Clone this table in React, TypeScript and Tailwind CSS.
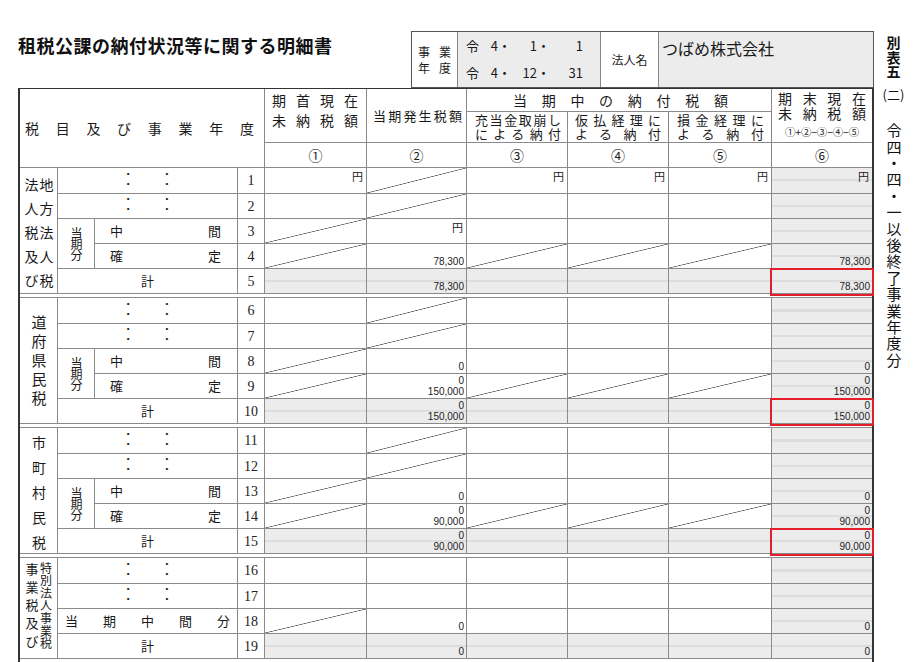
import React from "react";

const GRAY =
  "bg-[linear-gradient(to_bottom,#ececec_45%,#dddddd_45%,#dddddd_54%,#ececec_54%)]";
const DIAG =
  "bg-white bg-[linear-gradient(to_bottom_right,transparent_calc(50%_-_0.7px),#5a5a5a_50%,transparent_calc(50%_+_0.7px))]";

type Kind = "w" | "d" | "g";
type CellSpec = { k: Kind; yen?: boolean; nums?: string[]; red?: boolean };

const Y: CellSpec = { k: "w", yen: true };
const W: CellSpec = { k: "w" };
const D: CellSpec = { k: "d" };
const G: CellSpec = { k: "g" };

function Spread({ text, className = "" }: { text: string; className?: string }) {
  return (
    <div className={`flex justify-between ${className}`}>
      {Array.from(text).map((c, i) => (
        <span key={i}>{c}</span>
      ))}
    </div>
  );
}

/* multi-line text, each line distributed across the full width */
function JText({ text, className = "" }: { text: string; className?: string }) {
  return (
    <div className={`whitespace-pre-line text-justify [text-align-last:justify] ${className}`}>
      {text}
    </div>
  );
}

function Cell({ c }: { c: CellSpec }) {
  const bg = c.k === "g" ? GRAY : c.k === "d" ? DIAG : "bg-white";
  return (
    <div className={`relative flex flex-col ${bg}`}>
      {c.yen ? (
        <span className="self-end pr-[3px] pt-[2px] text-[11px] leading-[12px]">円</span>
      ) : null}
      {c.nums ? (
        <div className="mt-auto whitespace-pre-line pr-[2px] pb-[1px] text-right font-['Liberation_Sans',Arial,sans-serif] text-[10px] leading-[11px] text-[#222]">
          {c.nums.join("\n")}
        </div>
      ) : null}
      {c.red ? (
        <div className="pointer-events-none absolute -left-[2px] -right-[2px] -top-[1px] -bottom-[3px] z-10 border-2 border-[#e3202a]" />
      ) : null}
    </div>
  );
}

function Cells({ row }: { row: CellSpec[] }) {
  return (
    <>
      {row.map((c, i) => (
        <Cell key={i} c={c} />
      ))}
    </>
  );
}

function Dots() {
  return (
    <div className="col-span-2 flex items-center justify-center gap-[36px] bg-white pb-[4px] font-['Liberation_Sans',Arial,sans-serif] text-[8px] leading-[10px] text-[#111]">
      <div className="flex flex-col items-center">
        <span>•</span>
        <span>•</span>
      </div>
      <div className="flex flex-col items-center">
        <span>•</span>
        <span>•</span>
      </div>
    </div>
  );
}

function No({ n }: { n: number }) {
  return (
    <div className="flex items-center justify-center bg-white font-['Liberation_Serif',serif] text-[14px] text-[#222]">
      {n}
    </div>
  );
}

function Touki() {
  return (
    <div className="row-span-2 flex items-center justify-center bg-white">
      <span className="whitespace-nowrap text-[12px] leading-[14px] tracking-[-1px] [writing-mode:vertical-rl]">
        当期分
      </span>
    </div>
  );
}

function Pair({ a, b }: { a: string; b: string }) {
  return (
    <div className="flex items-center justify-between bg-white pl-[15px] pr-[16px] text-[13px]">
      <span>{a}</span>
      <span>{b}</span>
    </div>
  );
}

function Kei() {
  return (
    <div className="col-span-2 flex items-center justify-center bg-white text-[13px]">計</div>
  );
}

function Sep() {
  return <div className="col-span-10 bg-white" />;
}

function DateLine({ m, d }: { m: string; d: string }) {
  return (
    <div className="flex">
      <span className="w-[24px] shrink-0">令</span>
      <span className="w-[8px] shrink-0 text-right">4</span>
      <span className="w-[13px] shrink-0">・</span>
      <span className="w-[26px] shrink-0 text-right">{m}</span>
      <span className="w-[13px] shrink-0">・</span>
      <span className="w-[33px] shrink-0 text-right">{d}</span>
    </div>
  );
}

export default function App() {
  const yenG: CellSpec = { k: "g", yen: true };
  return (
    <div className="flex h-[662px] w-[913px] overflow-hidden bg-white font-['Noto_Sans_CJK_JP','Noto_Sans',sans-serif] text-[#1a1a1a]">
      <div className="w-[874px] shrink-0 pl-[18px] pt-[31px]">
        {/* top line */}
        <div className="flex h-[57px]">
          <h1 className="pt-[1px] text-[18px] font-bold leading-[26px] tracking-[0.5px] text-[#111]">
            租税公課の納付状況等に関する明細書
          </h1>
          <div className="ml-auto flex h-[57px] w-[463px] border border-[#555]">
            <div className="flex w-[45px] items-center justify-center">
              <JText text={"事業\n年度"} className="w-[33px] text-[12px] leading-[16px]" />
            </div>
            <div className="flex w-[143px] flex-col justify-center gap-[7px] border-l border-[#888] bg-[#ececec] pl-[8px] text-[13px] leading-[20px]">
              <DateLine m="1" d="1" />
              <DateLine m="12" d="31" />
            </div>
            <div className="flex w-[58px] items-center justify-center border-l border-[#888] text-[12px]">
              法人名
            </div>
            <div className="w-[215px] border-l border-[#888] bg-[#ececec] pl-[3px] pt-[6px] text-[16px] leading-[20px]">
              つばめ株式会社
            </div>
          </div>
        </div>

        {/* main table */}
        <div className="grid grid-cols-[37px_36px_142px_26px_101px_99px_100px_100px_102px_100px] grid-rows-[22px_30px_24px_repeat(3,25px_24px_24px_24px_24px_3px)_25px_24px_24px_24px_3px_24px] gap-px border-t border-r-2 border-l-2 border-[#333] bg-[#8a8a8a]">
          {/* header */}
          <div className="col-span-4 row-span-3 flex items-center bg-white pl-[5px] pr-[10px] text-[14px]">
            <Spread text="税目及び事業年度" className="w-full" />
          </div>
          <div className="row-span-2 bg-white pl-[7px] pr-[8px] pt-[1px]">
            <JText text={"期首現在\n未納税額"} className="text-[14px] leading-[20px]" />
          </div>
          <div className="row-span-2 flex items-center bg-white pl-[6px] pr-[4px] text-[13px]">
            <Spread text="当期発生税額" className="w-full" />
          </div>
          <div className="col-span-3 flex items-center bg-white pl-[46px] pr-[43px] text-[14px]">
            <Spread text="当期中の納付税額" className="w-full" />
          </div>
          <div className="row-span-2 flex flex-col bg-white px-[6px] pt-[2px]">
            <JText text={"期末現在\n未納税額"} className="text-[14px] leading-[15px]" />
            <div className="mt-[4px] text-center text-[10.5px] leading-[14px] tracking-[-0.2px]">①+②−③−④−⑤</div>
          </div>
          <div className="bg-white pl-[8px] pr-[6px] pt-[1px]">
            <JText text={"充当金取崩し\nによる納付"} className="text-[13px] leading-[14px]" />
          </div>
          <div className="bg-white px-[7px] pt-[1px]">
            <JText text={"仮払経理に\nよる納付"} className="text-[13px] leading-[14px]" />
          </div>
          <div className="bg-white pl-[8px] pr-[7px] pt-[1px]">
            <JText text={"損金経理に\nよる納付"} className="text-[13px] leading-[14px]" />
          </div>
          <div className="flex items-center justify-center bg-white text-[14px]">①</div>
          <div className="flex items-center justify-center bg-white text-[14px]">②</div>
          <div className="flex items-center justify-center bg-white text-[14px]">③</div>
          <div className="flex items-center justify-center bg-white text-[14px]">④</div>
          <div className="flex items-center justify-center bg-white text-[14px]">⑤</div>
          <div className="flex items-center justify-center bg-white text-[14px]">⑥</div>

          {/* section 1 */}
          <div className="row-span-5 flex items-start justify-center bg-white pt-[10px]">
            <span className="whitespace-nowrap text-[14px] leading-[15px] tracking-[10px] [writing-mode:vertical-lr]">
              法人税及び
              <br />
              地方法人税
            </span>
          </div>
          <Dots />
          <No n={1} />
          <Cells row={[Y, D, Y, Y, Y, yenG]} />
          <Dots />
          <No n={2} />
          <Cells row={[W, D, W, W, W, G]} />
          <Touki />
          <Pair a="中" b="間" />
          <No n={3} />
          <Cells row={[D, Y, W, W, W, G]} />
          <Pair a="確" b="定" />
          <No n={4} />
          <Cells row={[D, { k: "w", nums: ["78,300"] }, D, D, D, { k: "g", nums: ["78,300"] }]} />
          <Kei />
          <No n={5} />
          <Cells row={[G, { k: "g", nums: ["78,300"] }, G, G, G, { k: "g", nums: ["78,300"], red: true }]} />
          <Sep />

          {/* section 2 */}
          <div className="row-span-5 flex items-start justify-center bg-white pt-[17px]">
            <span className="whitespace-nowrap text-[15px] leading-[18px] tracking-[4px] [writing-mode:vertical-rl]">
              道府県民税
            </span>
          </div>
          <Dots />
          <No n={6} />
          <Cells row={[W, D, W, W, W, G]} />
          <Dots />
          <No n={7} />
          <Cells row={[W, D, W, W, W, G]} />
          <Touki />
          <Pair a="中" b="間" />
          <No n={8} />
          <Cells row={[D, { k: "w", nums: ["0"] }, W, W, W, { k: "g", nums: ["0"] }]} />
          <Pair a="確" b="定" />
          <No n={9} />
          <Cells row={[D, { k: "w", nums: ["0", "150,000"] }, D, D, D, { k: "g", nums: ["0", "150,000"] }]} />
          <Kei />
          <No n={10} />
          <Cells row={[G, { k: "g", nums: ["0", "150,000"] }, G, G, G, { k: "g", nums: ["0", "150,000"], red: true }]} />
          <Sep />

          {/* section 3 */}
          <div className="row-span-5 flex items-start justify-center bg-white pt-[8px]">
            <span className="whitespace-nowrap text-[14px] leading-[17px] tracking-[11px] [writing-mode:vertical-rl]">
              市町村民税
            </span>
          </div>
          <Dots />
          <No n={11} />
          <Cells row={[W, D, W, W, W, G]} />
          <Dots />
          <No n={12} />
          <Cells row={[W, D, W, W, W, G]} />
          <Touki />
          <Pair a="中" b="間" />
          <No n={13} />
          <Cells row={[D, { k: "w", nums: ["0"] }, W, W, W, { k: "g", nums: ["0"] }]} />
          <Pair a="確" b="定" />
          <No n={14} />
          <Cells row={[D, { k: "w", nums: ["0", "90,000"] }, D, D, D, { k: "g", nums: ["0", "90,000"] }]} />
          <Kei />
          <No n={15} />
          <Cells row={[G, { k: "g", nums: ["0", "90,000"] }, G, G, G, { k: "g", nums: ["0", "90,000"], red: true }]} />
          <Sep />

          {/* section 4 */}
          <div className="row-span-4 flex items-start justify-center bg-white">
            <span className="whitespace-nowrap pt-[5px] text-[13px] leading-[14px] tracking-[5px] [writing-mode:vertical-lr]">
              事業税及び
            </span>
            <span className="whitespace-nowrap pt-[4px] text-[12px] leading-[14px] tracking-[0.6px] [writing-mode:vertical-lr]">
              特別法人事業税
            </span>
          </div>
          <Dots />
          <No n={16} />
          <Cells row={[W, W, W, W, W, G]} />
          <Dots />
          <No n={17} />
          <Cells row={[W, W, W, W, W, G]} />
          <div className="col-span-2 flex items-center justify-between bg-white px-[7px] text-[13px]">
            <span>当</span>
            <span>期</span>
            <span>中</span>
            <span>間</span>
            <span>分</span>
          </div>
          <No n={18} />
          <Cells row={[D, { k: "w", nums: ["0"] }, W, W, W, { k: "g", nums: ["0"] }]} />
          <Kei />
          <No n={19} />
          <Cells row={[G, { k: "g", nums: ["0"] }, G, G, G, { k: "g", nums: ["0"] }]} />
          <Sep />
          <div className="col-span-10 bg-white" />
        </div>
      </div>

      {/* right vertical caption */}
      <div className="flex flex-1 flex-col items-center pt-[36px] text-[#111]">
        <div className="whitespace-nowrap text-[14px] font-bold leading-[18px] tracking-[0.5px] [writing-mode:vertical-rl]">
          別表五
        </div>
        <div className="mt-[8px] text-[13px] leading-[14px]">(二)</div>
        <div className="mt-[21px] whitespace-nowrap text-[15px] leading-[22px] tracking-[1.4px] [writing-mode:vertical-rl]">
          令四・四・一以後終了事業年度分
        </div>
      </div>
    </div>
  );
}
